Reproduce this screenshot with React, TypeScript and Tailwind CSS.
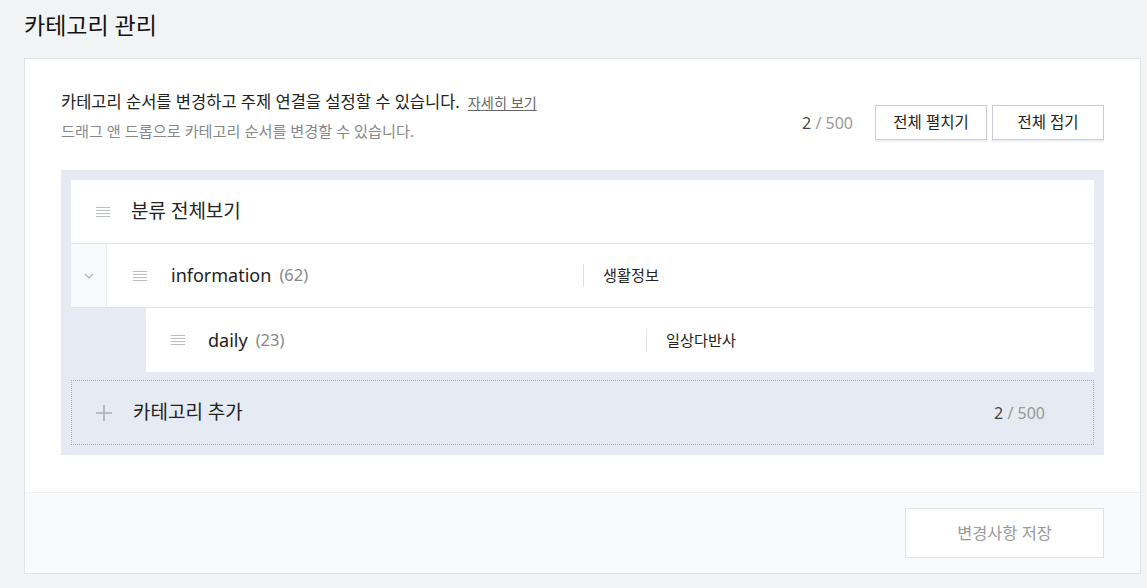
import React from "react";

const font = { fontFamily: '"Noto Sans", "Noto Sans CJK KR", sans-serif' };

function DragHandle() {
  return (
    <div className="flex flex-col gap-[2px] w-[14px]">
      {[0, 1, 2, 3].map((i) => (
        <div key={i} className="h-px bg-[#b8bcc4]" />
      ))}
    </div>
  );
}

function Counter() {
  return (
    <span className="text-[16px] font-normal text-[#999]">
      <span className="text-[#444]">2</span> / 500
    </span>
  );
}

export default function App() {
  return (
    <div className="min-h-[588px] bg-[#f2f3f5] pl-6 pr-[6px] pt-[9px] pb-[14px]" style={font}>
      <h1 className="text-[23px] leading-[33px] text-[#111] font-normal mb-4">카테고리 관리</h1>

      <div className="bg-white border border-[#e1e3ea]">
        {/* 본문 */}
        <div className="px-9 pt-[32px] pb-[37px]">
          <div className="flex items-end justify-between mb-[29px]">
            <div>
              <p className="text-[16.5px] leading-[22px] text-[#222]">
                카테고리 순서를 변경하고 주제 연결을 설정할 수 있습니다.
                <a className="ml-[8px] text-[14.2px] text-[#666] underline underline-offset-2">자세히 보기</a>
              </p>
              <p className="mt-[7px] text-[15.2px] leading-[20px] text-[#888]">
                드래그 앤 드롭으로 카테고리 순서를 변경할 수 있습니다.
              </p>
            </div>
            <div className="flex items-center gap-[5px] mb-px">
              <div className="mr-[17px]">
                <Counter />
              </div>
              <button className="w-[112px] h-[35px] bg-white border border-[#c8ccd4] shadow-[0_2px_0_#eef0f3] text-[15.5px] text-[#222]">
                전체 펼치기
              </button>
              <button className="w-[112px] h-[35px] bg-white border border-[#c8ccd4] shadow-[0_2px_0_#eef0f3] text-[15.5px] text-[#222]">
                전체 접기
              </button>
            </div>
          </div>

          {/* 카테고리 목록 */}
          <div className="bg-[#e6eaf2] p-[10px]">
            <div className="flex items-center h-16 bg-white border-b border-[#e1e4ee] pl-[25px]">
              <DragHandle />
              <span className="ml-[21px] text-[19px] text-[#222]">분류 전체보기</span>
            </div>

            <div className="flex h-16 bg-white border-b border-[#e1e4ee]">
              <div className="w-9 bg-[#f8f9fb] border-r border-[#eef0f4] flex items-center justify-center">
                <svg width="10" height="6" viewBox="0 0 10 6" fill="none">
                  <path d="M1 1l4 4 4-4" stroke="#aab0b8" strokeWidth="1.2" />
                </svg>
              </div>
              <div className="flex items-center pl-[26px] w-[476px]">
                <DragHandle />
                <span className="ml-[24px] text-[18px] text-[#222]">information</span>
                <span className="ml-[8px] text-[16.5px] text-[#888]">(62)</span>
              </div>
              <div className="flex items-center">
                <div className="w-px h-[23px] bg-[#dde0e6]" />
                <span className="ml-[19px] text-[15.2px] text-[#222]">생활정보</span>
              </div>
            </div>

            <div className="flex h-16 ml-[75px] bg-white">
              <div className="flex items-center pl-[25px] w-[500px]">
                <DragHandle />
                <span className="ml-[23px] text-[18px] text-[#222]">daily</span>
                <span className="ml-[8px] text-[16.5px] text-[#888]">(23)</span>
              </div>
              <div className="flex items-center">
                <div className="w-px h-[23px] bg-[#dde0e6]" />
                <span className="ml-[19px] text-[15.2px] text-[#222]">일상다반사</span>
              </div>
            </div>

            <div className="mt-2 h-[65px] border border-dotted border-[#a9adb5] flex items-center justify-between pl-[24px] pr-[48px]">
              <div className="flex items-center">
                <svg width="16" height="16" viewBox="0 0 16 16">
                  <path d="M8 0v16M0 8h16" stroke="#a9aeb6" strokeWidth="1.6" />
                </svg>
                <span className="ml-[21px] text-[19px] text-[#222]">카테고리 추가</span>
              </div>
              <Counter />
            </div>
          </div>
        </div>

        {/* 하단 */}
        <div className="bg-[#f9fafb] border-t border-[#eef0f3] px-9 pt-[15px] pb-[15px] flex justify-end">
          <button className="w-[199px] h-[50px] bg-white border border-[#dfe2e8] text-[16.4px] text-[#999]">
            변경사항 저장
          </button>
        </div>
      </div>
    </div>
  );
}
